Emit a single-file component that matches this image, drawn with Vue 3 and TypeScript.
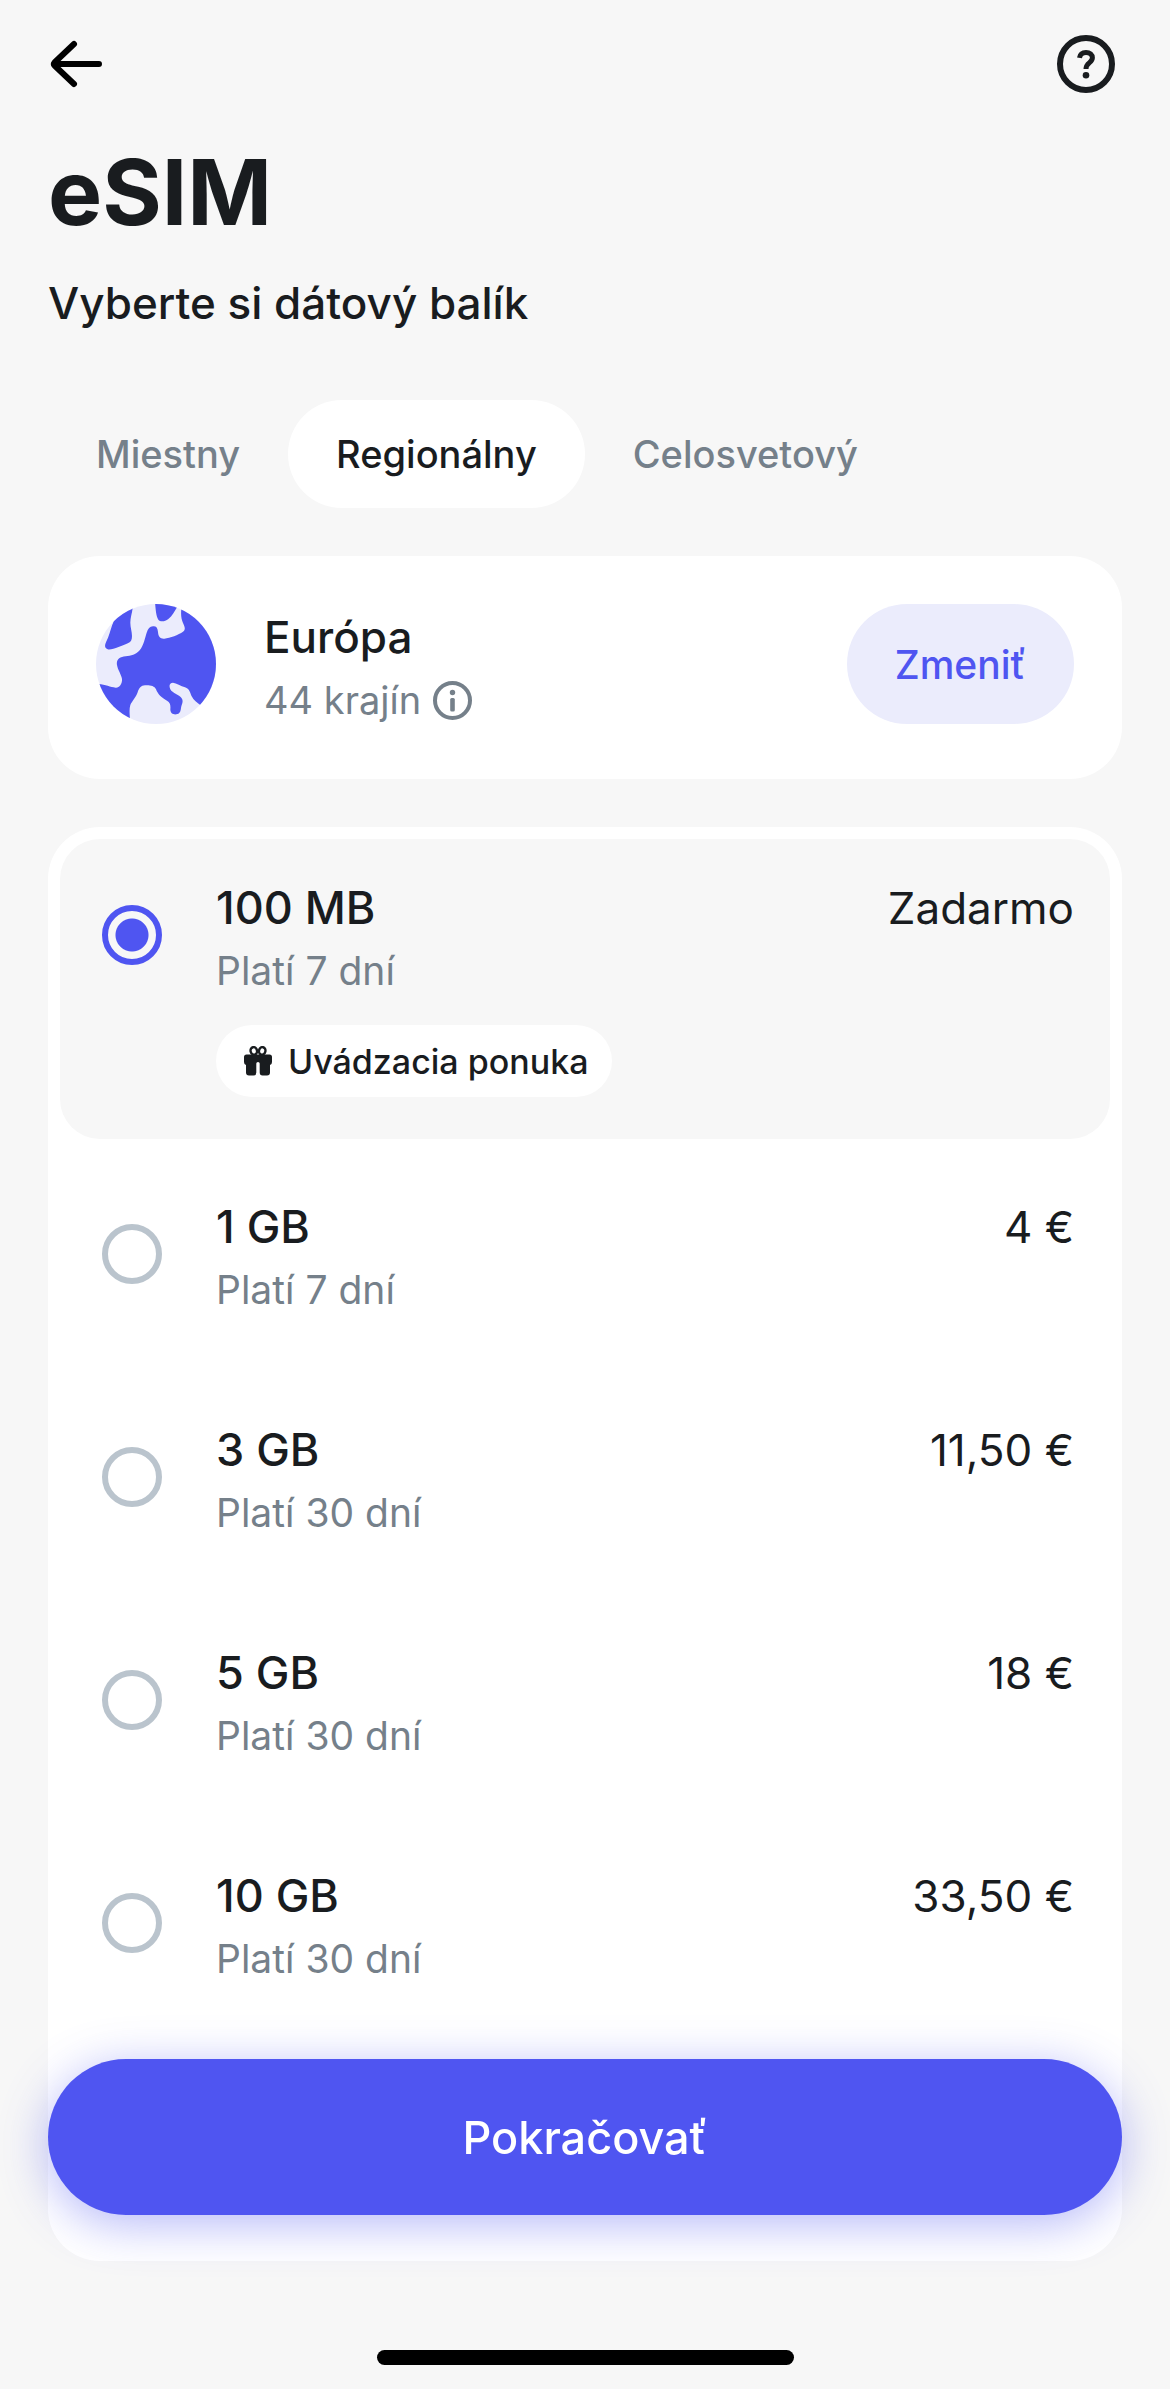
<script setup lang="ts">
import { ref } from 'vue'

interface Plan {
  id: string
  size: string
  validity: string
  price: string
  offer?: string
}

const tabs: string[] = ['Miestny', 'Regionálny', 'Celosvetový']
const activeTab = ref<string>('Regionálny')

const plans: Plan[] = [
  { id: 'mb100', size: '100 MB', validity: 'Platí 7 dní', price: 'Zadarmo', offer: 'Uvádzacia ponuka' },
  { id: 'gb1', size: '1 GB', validity: 'Platí 7 dní', price: '4 €' },
  { id: 'gb3', size: '3 GB', validity: 'Platí 30 dní', price: '11,50 €' },
  { id: 'gb5', size: '5 GB', validity: 'Platí 30 dní', price: '18 €' },
  { id: 'gb10', size: '10 GB', validity: 'Platí 30 dní', price: '33,50 €' },
]
const selected = ref<string>('mb100')
</script>

<template>
  <div class="screen">
    <header class="topbar">
      <button type="button" class="icon-button" aria-label="Späť">
        <svg class="icon" viewBox="0 0 60 60" fill="none" stroke="#000" stroke-width="6" stroke-linecap="round" stroke-linejoin="round">
          <path d="M51 30H6M26 10 6.500 28.500Q5 30 6.500 31.500L26 50" />
        </svg>
      </button>
      <button type="button" class="icon-button" aria-label="Pomoc">
        <svg class="icon" viewBox="0 0 60 60" fill="none" stroke="#191c1f">
          <circle cx="30" cy="30" r="26" stroke-width="6" />
          <path d="M23.500 23.800C24 20.500 26.500 18.400 30 18.400C33.800 18.400 36.400 20.600 36.400 23.800C36.400 29 30 28.300 30 35" stroke-width="5" />
          <circle cx="30" cy="41.300" r="3.300" fill="#191c1f" stroke="none" />
        </svg>
      </button>
    </header>

    <main class="content">
      <h1 class="title">eSIM</h1>
      <p class="subtitle">Vyberte si dátový balík</p>

      <nav class="tabs">
        <button
          v-for="tab in tabs"
          :key="tab"
          type="button"
          class="tab"
          :class="{ active: tab === activeTab }"
          @click="activeTab = tab"
        >
          {{ tab }}
        </button>
      </nav>

      <section class="region">
        <svg class="globe" viewBox="33 26 360 360" aria-hidden="true">
          <defs>
            <clipPath id="globe-clip"><circle cx="213" cy="206" r="180" /></clipPath>
          </defs>
          <g clip-path="url(#globe-clip)">
            <rect x="33" y="26" width="360" height="360" fill="#ebecfc" />
            <g fill="#4f55f1">
              <path d="M84 84C78 96 75 116 66 134C60 146 56 157 68 162C80 166 112 150 130 143C138 140 141 133 141 122C141 108 136 96 136 82C136 68 141 54 143 38L100 30Z" />
              <path d="M210 20C212 42 213 62 220 73C226 81 240 79 250 71C262 61 268 48 277 34V20Z" />
              <path d="M289 40C287 60 289 72 294 83C299 94 303 102 294 109C280 119 256 127 238 130C226 131 220 124 219 110C218 97 213 92 204 93C194 94 189 100 185 112C180 128 176 150 164 165C152 178 138 182 122 183C104 184 93 194 96 209C98 223 110 240 111 251C112 264 104 278 92 277C76 275 62 268 40 266L30 330L136 386C134 358 132 342 136 329C142 316 152 308 158 291C162 279 168 270 180 270C194 269 208 271 213 282C218 296 230 308 246 316C256 321 257 330 256 342C256 354 264 358 274 357C284 356 287 348 288 338C289 328 296 320 291 310C284 298 262 294 256 282C251 270 254 262 264 262C274 263 288 272 300 276C314 281 315 292 320 303C326 315 335 321 350 332L420 300V40Z" />
            </g>
          </g>
        </svg>
        <div class="region-text">
          <h2 class="region-name">Európa</h2>
          <p class="region-count">
            <span>44 krajín</span>
            <svg class="icon-info" viewBox="0 0 39 39" aria-hidden="true">
              <circle cx="19.500" cy="19.500" r="17.500" fill="none" stroke="#75808a" stroke-width="4" />
              <circle cx="19.500" cy="11.500" r="2.700" fill="#75808a" />
              <rect x="17.200" y="17" width="4.600" height="13.500" rx="1.500" fill="#75808a" />
            </svg>
          </p>
        </div>
        <button type="button" class="change">Zmeniť</button>
      </section>

      <section class="plans" aria-label="Dátové balíky">
        <label
          v-for="plan in plans"
          :key="plan.id"
          class="plan"
          :class="{ selected: plan.id === selected }"
          :for="plan.id"
        >
          <input :id="plan.id" v-model="selected" class="radio" type="radio" name="plan" :value="plan.id" />
          <span class="plan-text">
            <span class="plan-size">{{ plan.size }}</span>
            <span class="plan-validity">{{ plan.validity }}</span>
            <span v-if="plan.offer" class="badge">
              <svg class="icon-gift" viewBox="0 0 28 30" aria-hidden="true">
                <g fill="none" stroke="#191c1f" stroke-width="2.400">
                  <ellipse cx="9.800" cy="4.900" rx="3.200" ry="3.800" transform="rotate(-14 9.800 4.900)" />
                  <ellipse cx="18.200" cy="4.900" rx="3.200" ry="3.800" transform="rotate(14 18.200 4.900)" />
                </g>
                <path
                  fill="#191c1f"
                  d="M2.500 8.500H25.500Q28 8.500 28 11V16Q28 18.500 26 19V26.500Q26 29.500 23 29.500H18.500Q15.700 29.500 15.700 26.500V17.500Q15.700 16 14 16Q12.300 16 12.300 17.500V26.500Q12.300 29.500 9.500 29.500H5Q2 29.500 2 26.500V19Q0 18.500 0 16V11Q0 8.500 2.500 8.500Z"
                />
              </svg>
              <span>{{ plan.offer }}</span>
            </span>
          </span>
          <span class="price">{{ plan.price }}</span>
        </label>
      </section>
    </main>

    <footer class="footer">
      <button type="button" class="continue">Pokračovať</button>
      <div class="home-indicator"></div>
    </footer>
  </div>
</template>

<style>
body {
  margin: 0;
  background: #f7f7f7;
}
</style>

<style scoped>
.screen {
  box-sizing: border-box;
  min-height: 100vh;
  padding: 34px 48px 128px;
  background: #f7f7f7;
  color: #191c1f;
  font-family: Inter, "Liberation Sans", sans-serif;
}

button {
  padding: 0;
  border: 0;
  background: none;
  color: inherit;
  font: inherit;
  cursor: pointer;
}

h1,
h2,
p {
  margin: 0;
}

.topbar {
  display: flex;
  justify-content: space-between;
  align-items: center;
  height: 60px;
  padding-right: 6px;
}

.icon-button,
.icon {
  display: block;
  width: 60px;
  height: 60px;
}

.title {
  margin-top: 44px;
  font-size: 91px;
  font-weight: 700;
  line-height: 108px;
}

.subtitle {
  margin-top: 24px;
  font-size: 44px;
  font-weight: 500;
  line-height: 66px;
}

.tabs {
  display: flex;
  margin-top: 64px;
}

.tab {
  height: 108px;
  padding: 0 48px;
  border-radius: 54px;
  color: #75808a;
  font-size: 38px;
  font-weight: 500;
}

.tab.active {
  background: #fff;
  color: #191c1f;
}

.region {
  display: flex;
  align-items: flex-start;
  margin-top: 48px;
  padding: 48px 48px 49px;
  border-radius: 52px;
  background: #fff;
}

.globe {
  flex: none;
  width: 120px;
  height: 120px;
}

.region-text {
  flex: 1;
  margin-left: 48px;
}

.region-name {
  font-size: 44px;
  font-weight: 500;
  line-height: 66px;
}

.region-count {
  display: flex;
  align-items: center;
  gap: 12px;
  color: #75808a;
  font-size: 38px;
  line-height: 60px;
}

.icon-info {
  width: 39px;
  height: 39px;
}

.change {
  height: 120px;
  padding: 0 48px;
  border-radius: 60px;
  background: #ebecfc;
  color: #4f55f1;
  font-size: 39px;
  font-weight: 500;
}

.plans {
  display: flex;
  flex-direction: column;
  gap: 19px;
  margin-top: 48px;
  padding: 12px 12px 230px;
  border-radius: 52px;
  background: #fff;
}

.plan {
  display: flex;
  align-items: flex-start;
  padding: 36px 36px 42px;
  border-radius: 40px;
  cursor: pointer;
}

.plan.selected {
  background: #f7f7f7;
}

.radio {
  flex: none;
  box-sizing: border-box;
  width: 60px;
  height: 60px;
  margin: 30px 54px 0 6px;
  border: 6px solid #bac4cd;
  border-radius: 50%;
  appearance: none;
}

.radio:checked {
  border-color: #4f55f1;
  background: radial-gradient(circle, #4f55f1 16px, transparent 17px);
}

.plan-text {
  flex: 1;
}

.plan-size {
  display: block;
  font-size: 45px;
  font-weight: 500;
  line-height: 66px;
}

.plan-validity {
  display: block;
  color: #75808a;
  font-size: 39px;
  line-height: 60px;
}

.badge {
  display: inline-flex;
  align-items: center;
  gap: 16px;
  height: 72px;
  margin-top: 24px;
  padding: 0 24px 0 28px;
  border-radius: 36px;
  background: #fff;
  font-size: 34px;
  font-weight: 500;
  vertical-align: top;
}

.icon-gift {
  width: 28px;
  height: 30px;
}

.price {
  font-size: 44px;
  line-height: 66px;
}

.footer {
  position: fixed;
  right: 0;
  bottom: 0;
  left: 0;
  display: flex;
  flex-direction: column;
  align-items: center;
  padding: 0 48px 24px;
}

.continue {
  width: 100%;
  height: 156px;
  border-radius: 78px;
  background: #4f55f1;
  box-shadow: 0 9px 48px rgba(79, 85, 241, 0.42);
  color: #fff;
  font-size: 45px;
  font-weight: 500;
}

.home-indicator {
  width: 417px;
  height: 15px;
  margin-top: 135px;
  border-radius: 8px;
  background: #000;
}
</style>
